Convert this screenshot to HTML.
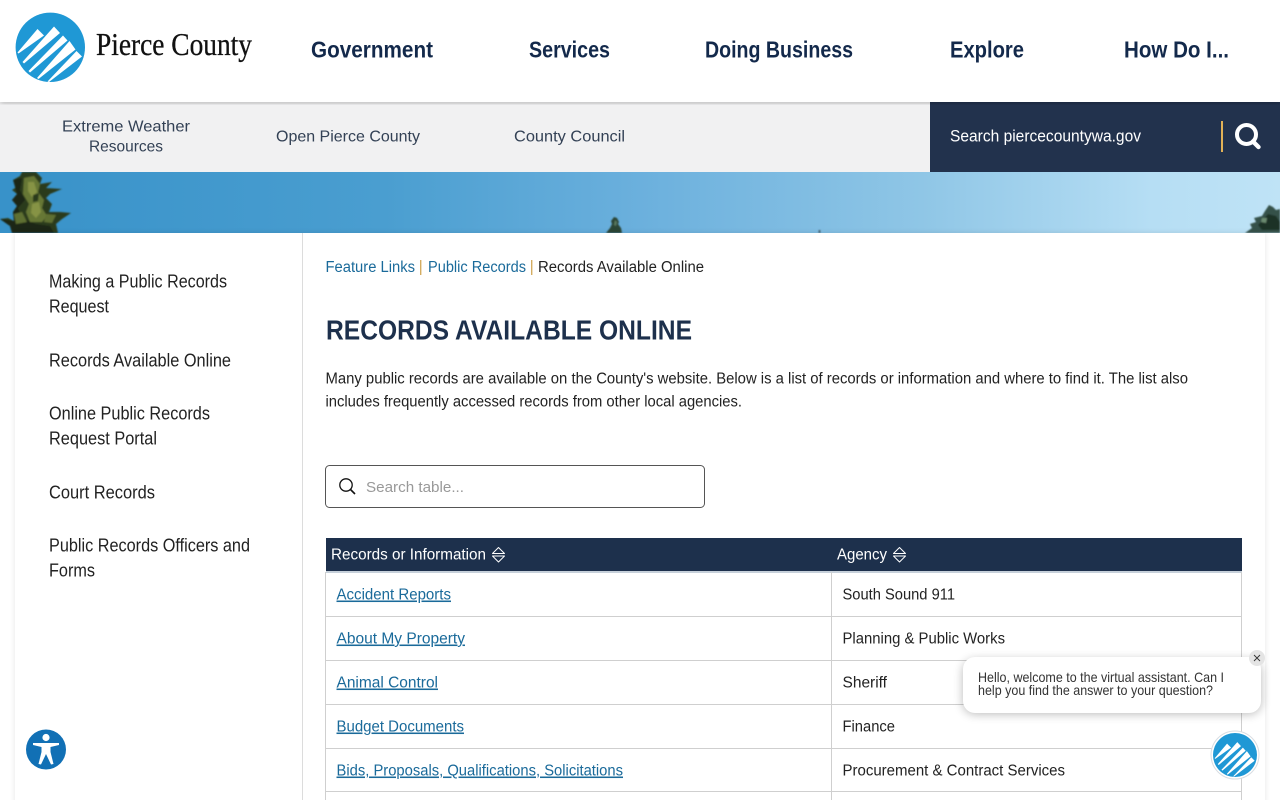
<!DOCTYPE html>
<html lang="en">
<head>
<meta charset="utf-8">
<title>Records Available Online</title>
<style>
html,body{margin:0;padding:0;width:1280px;height:800px;overflow:hidden;background:#fff}
svg{display:block}
text{font-family:"Liberation Sans",sans-serif;white-space:pre}
.nav{font-size:23px;font-weight:700;fill:#13294b}
.sub{font-size:16px;fill:#334155}
.side{font-size:18px;fill:#222}
.bc{font-size:15.5px;fill:#1a6a9a}
.p{font-size:15.5px;fill:#222}
.th{font-size:15.5px;fill:#fff}
.l{font-size:15.5px;fill:#1a6a9a;text-decoration:underline}
.c{font-size:15.5px;fill:#222}
</style>
</head>
<body>
<svg width="1280" height="800" viewBox="0 0 1280 800" xmlns="http://www.w3.org/2000/svg">
<defs>
<linearGradient id="sky" x1="0" x2="1" y1="0" y2="0">
<stop offset="0" stop-color="#3892c9"/>
<stop offset=".3" stop-color="#4a9ed0"/>
<stop offset=".5" stop-color="#6bb0dd"/>
<stop offset=".72" stop-color="#8fc6e6"/>
<stop offset=".9" stop-color="#b6def4"/>
<stop offset="1" stop-color="#bfe3f6"/>
</linearGradient>
<filter id="sh1" x="-5%" y="-5%" width="110%" height="110%"><feGaussianBlur stdDeviation="3"/></filter>
<filter id="sh2" x="-10%" y="-30%" width="120%" height="170%"><feGaussianBlur stdDeviation="5"/></filter>
<filter id="bl" x="-10%" y="-10%" width="120%" height="120%"><feGaussianBlur stdDeviation=".7"/></filter>
<clipPath id="heroclip"><rect x="0" y="172" width="1280" height="61"/></clipPath>
</defs>

<!-- subnav -->
<rect x="0" y="102" width="930" height="70" fill="#f1f1f2"/>
<rect x="930" y="102" width="350" height="70" fill="#22324d"/>
<!-- header -->
<rect x="0" y="98" width="1280" height="6" fill="#000" opacity=".22" filter="url(#sh1)"/>
<rect x="0" y="0" width="1280" height="102" fill="#fff"/>

<!-- logo -->
<circle cx="50.3" cy="47.3" r="34.7" fill="#1f98d5"/>
<g fill="#fff">
<polygon points="17.5,52.5 37.5,29 44,35.5 18.5,53.5"/>
<polygon points="22.5,62 54,26.5 60,33 24,63.5"/>
<polygon points="28.5,71 63,35.5 67.5,40.5 30,72.5"/>
<polygon points="37,78 69.5,41 75.5,49.5 38.5,79"/>
<polygon points="47.5,81.5 76.5,51 82,56.5 49,82"/>
</g>
<text x="96" y="55" textLength="156" lengthAdjust="spacingAndGlyphs" style="font-family:'Liberation Serif',serif;font-size:32px;fill:#111;stroke:#111;stroke-width:.3">Pierce County</text>

<!-- main nav -->
<text class="nav" x="311" y="57.5" textLength="122" lengthAdjust="spacingAndGlyphs">Government</text>
<text class="nav" x="529" y="57.5" textLength="81" lengthAdjust="spacingAndGlyphs">Services</text>
<text class="nav" x="705" y="57.5" textLength="148" lengthAdjust="spacingAndGlyphs">Doing Business</text>
<text class="nav" x="950" y="57.5" textLength="74" lengthAdjust="spacingAndGlyphs">Explore</text>
<text class="nav" x="1124" y="57.5" textLength="105" lengthAdjust="spacingAndGlyphs">How Do I...</text>

<!-- sub nav text -->
<text class="sub" x="62" y="131.5" textLength="128" lengthAdjust="spacingAndGlyphs">Extreme Weather</text>
<text class="sub" x="89" y="151.5" textLength="74" lengthAdjust="spacingAndGlyphs">Resources</text>
<text class="sub" x="276" y="141.5" textLength="144" lengthAdjust="spacingAndGlyphs">Open Pierce County</text>
<text class="sub" x="514" y="141.5" textLength="111" lengthAdjust="spacingAndGlyphs">County Council</text>
<text x="950" y="141.5" textLength="191" lengthAdjust="spacingAndGlyphs" style="font-size:16.5px;fill:#fff">Search piercecountywa.gov</text>
<rect x="1221" y="121" width="2" height="31" fill="#e2b257"/>
<circle cx="1246.5" cy="134.5" r="9.5" fill="none" stroke="#fff" stroke-width="4"/>
<line x1="1253" y1="141.5" x2="1258.5" y2="147" stroke="#fff" stroke-width="4.4" stroke-linecap="round"/>

<!-- hero -->
<rect x="0" y="172" width="1280" height="61" fill="url(#sky)"/>
<g clip-path="url(#heroclip)">
<g filter="url(#bl)">
<!-- left tree -->
<polygon fill="#2b3a1d" points="22,172 36,172 42,178 40,184 52,182 46,188 62,189 50,194 46,198 52,204 49,212 60,212 71,213 62,219 56,224 58,233 12,233 10,226 0,219 8,218 14,221 13,212 17,206 12,200 17,194 12,190 18,186 13,180 20,176"/>
<polygon fill="#1a2612" points="13,180 22,178 20,190 25,200 18,208 22,218 36,224 50,226 54,233 12,233 10,226 0,219 14,221 13,212 17,206 12,200 17,194"/>
<polygon fill="#667735" points="24,178 34,176 40,184 38,192 44,200 42,208 47,216 42,222 30,222 26,212 29,204 23,194"/>
<polygon fill="#869345" points="28,182 34,182 37,192 32,197 28,191"/>
<polygon fill="#869345" points="32,204 39,202 41,212 36,218 31,213"/>
<polygon fill="#2b3a1d" points="33,195 39,193 38,201 33,202"/>
<polygon fill="#5f6f30" points="14,214 22,212 27,222 16,224"/>
<polygon fill="#5f6f30" points="46,214 56,215 52,223 44,222"/>
<!-- small trees -->
<polygon fill="#2b4436" points="614,217 617,218 619,222 618,224 621,228 622,233 606,233 610,228 612,224 611,221"/>
<polygon fill="#5a7a60" points="615,220 617,222 616,226 614,225"/>
<rect x="818.5" y="230" width="2" height="3" fill="#4a6a7c"/>
<!-- right tree -->
<polygon fill="#34514a" points="1269,205 1273,207 1276,210 1280,209 1280,233 1245,233 1252,228 1250,224 1256,222 1254,218 1262,216 1265,211"/>
<polygon fill="#1f3328" points="1268,214 1276,216 1280,222 1280,230 1262,230 1258,225"/>
<polygon fill="#6a8a70" points="1262,218 1267,218 1266,223 1261,222"/>
</g>
</g>

<!-- content panel -->
<rect x="15" y="233" width="1250" height="580" fill="#000" opacity=".10" filter="url(#sh1)"/>
<rect x="15" y="233" width="1250" height="580" fill="#fff"/>
<rect x="302" y="233" width="1" height="567" fill="#dcdcdc"/>

<!-- sidebar -->
<text class="side" x="49" y="287.5" textLength="178" lengthAdjust="spacingAndGlyphs">Making a Public Records</text>
<text class="side" x="49" y="312.5" textLength="60" lengthAdjust="spacingAndGlyphs">Request</text>
<text class="side" x="49" y="366.5" textLength="182" lengthAdjust="spacingAndGlyphs">Records Available Online</text>
<text class="side" x="49" y="419.5" textLength="161" lengthAdjust="spacingAndGlyphs">Online Public Records</text>
<text class="side" x="49" y="444.5" textLength="108" lengthAdjust="spacingAndGlyphs">Request Portal</text>
<text class="side" x="49" y="498.5" textLength="106" lengthAdjust="spacingAndGlyphs">Court Records</text>
<text class="side" x="49" y="551.5" textLength="201" lengthAdjust="spacingAndGlyphs">Public Records Officers and</text>
<text class="side" x="49" y="576.5" textLength="46" lengthAdjust="spacingAndGlyphs">Forms</text>

<!-- breadcrumb -->
<text class="bc" x="325.5" y="272" textLength="89.5" lengthAdjust="spacingAndGlyphs">Feature Links</text>
<rect x="420" y="260" width="1.4" height="15" fill="#d4ad62"/>
<text class="bc" x="428" y="272" textLength="98" lengthAdjust="spacingAndGlyphs">Public Records</text>
<rect x="531" y="260" width="1.4" height="15" fill="#d4ad62"/>
<text class="p" x="538" y="272" textLength="166" lengthAdjust="spacingAndGlyphs">Records Available Online</text>

<!-- heading -->
<text x="326" y="339.5" textLength="366" lengthAdjust="spacingAndGlyphs" style="font-size:28px;font-weight:700;fill:#1d304c">RECORDS AVAILABLE ONLINE</text>
<text class="p" x="325.5" y="383.5" textLength="862.5" lengthAdjust="spacingAndGlyphs">Many public records are available on the County's website. Below is a list of records or information and where to find it. The list also</text>
<text class="p" x="325.5" y="406.5" textLength="416.5" lengthAdjust="spacingAndGlyphs">includes frequently accessed records from other local agencies.</text>

<!-- table search -->
<rect x="325.5" y="465.5" width="379" height="42" rx="4" fill="#fff" stroke="#555" stroke-width="1"/>
<circle cx="346" cy="485" r="6.2" fill="none" stroke="#111" stroke-width="1.3"/>
<line x1="350.5" y1="489.5" x2="355" y2="494" stroke="#111" stroke-width="1.6"/>
<text x="366" y="492" textLength="98" lengthAdjust="spacingAndGlyphs" style="font-size:15px;fill:#999">Search table...</text>

<!-- table header -->
<rect x="326" y="538" width="916" height="33" fill="#1d304c"/>
<rect x="326" y="571" width="916" height="2" fill="#c6d0da"/>
<text class="th" x="331" y="559.5" textLength="155" lengthAdjust="spacingAndGlyphs">Records or Information</text>
<path d="M492.5 553.5L498.5 547.5L504.5 553.5ZM492.5 556L498.5 562L504.5 556Z" fill="none" stroke="#fff" stroke-width="1" stroke-linejoin="round"/>
<text class="th" x="837" y="559.5" textLength="50" lengthAdjust="spacingAndGlyphs">Agency</text>
<path d="M893.5 553.5L899.5 547.5L905.5 553.5ZM893.5 556L899.5 562L905.5 556Z" fill="none" stroke="#fff" stroke-width="1" stroke-linejoin="round"/>

<!-- table lines -->
<g fill="#cfcfcf">
<rect x="325" y="572" width="1" height="228"/>
<rect x="831" y="572" width="1" height="228"/>
<rect x="1241" y="572" width="1" height="228"/>
<rect x="325" y="616" width="917" height="1"/>
<rect x="325" y="660" width="917" height="1"/>
<rect x="325" y="704" width="917" height="1"/>
<rect x="325" y="748" width="917" height="1"/>
<rect x="325" y="791" width="917" height="1"/>
</g>

<text class="l" x="336.5" y="599.5" textLength="114.5" lengthAdjust="spacingAndGlyphs">Accident Reports</text>
<text class="c" x="842.5" y="599.5" textLength="112.5" lengthAdjust="spacingAndGlyphs">South Sound 911</text>
<text class="l" x="336.5" y="643.5" textLength="128.5" lengthAdjust="spacingAndGlyphs">About My Property</text>
<text class="c" x="842.5" y="643.5" textLength="162.5" lengthAdjust="spacingAndGlyphs">Planning &amp; Public Works</text>
<text class="l" x="336.5" y="687.5" textLength="101.5" lengthAdjust="spacingAndGlyphs">Animal Control</text>
<text class="c" x="842.5" y="687.5" textLength="44.5" lengthAdjust="spacingAndGlyphs">Sheriff</text>
<text class="l" x="336.5" y="731.5" textLength="127.5" lengthAdjust="spacingAndGlyphs">Budget Documents</text>
<text class="c" x="842.5" y="731.5" textLength="52.5" lengthAdjust="spacingAndGlyphs">Finance</text>
<text class="l" x="336.5" y="775.5" textLength="286.5" lengthAdjust="spacingAndGlyphs">Bids, Proposals, Qualifications, Solicitations</text>
<text class="c" x="842.5" y="775.5" textLength="222.5" lengthAdjust="spacingAndGlyphs">Procurement &amp; Contract Services</text>

<!-- accessibility -->
<circle cx="46" cy="749.5" r="20" fill="#1170b5"/>
<circle cx="46" cy="737.5" r="3.6" fill="#fff"/>
<path d="M33 743L59 743L59 745L50.5 747L50.5 752L53.5 764L51 764.5L46 754L41 764.5L38.5 764L41.5 752L41.5 747L33 745Z" fill="#fff"/>

<!-- chat bubble -->
<rect x="963" y="660" width="298" height="54" rx="12" fill="#000" opacity=".28" filter="url(#sh2)"/>
<rect x="963" y="657" width="298" height="56" rx="12" fill="#fff"/>
<text x="978" y="682" textLength="246" lengthAdjust="spacingAndGlyphs" style="font-size:14px;fill:#333">Hello, welcome to the virtual assistant. Can I</text>
<text x="978" y="695" textLength="235" lengthAdjust="spacingAndGlyphs" style="font-size:14px;fill:#333">help you find the answer to your question?</text>
<circle cx="1257" cy="658" r="8" fill="#e4e4e4"/>
<path d="M1254 655L1260 661M1260 655L1254 661" stroke="#333" stroke-width=".9"/>

<!-- chat button -->
<circle cx="1235" cy="755" r="24" fill="#fff" stroke="#d8dde2" stroke-width="1"/>
<circle cx="1235" cy="755" r="22" fill="#1f98d5"/>
<g fill="#fff" transform="translate(1235 755) scale(.62) translate(-50.3 -47.3)">
<polygon points="17.5,52.5 37.5,29 44,35.5 18.5,53.5"/>
<polygon points="22.5,62 54,26.5 60,33 24,63.5"/>
<polygon points="28.5,71 63,35.5 67.5,40.5 30,72.5"/>
<polygon points="37,78 69.5,41 75.5,49.5 38.5,79"/>
<polygon points="47.5,81.5 76.5,51 82,56.5 49,82"/>
</g>
</svg>
</body>
</html>
